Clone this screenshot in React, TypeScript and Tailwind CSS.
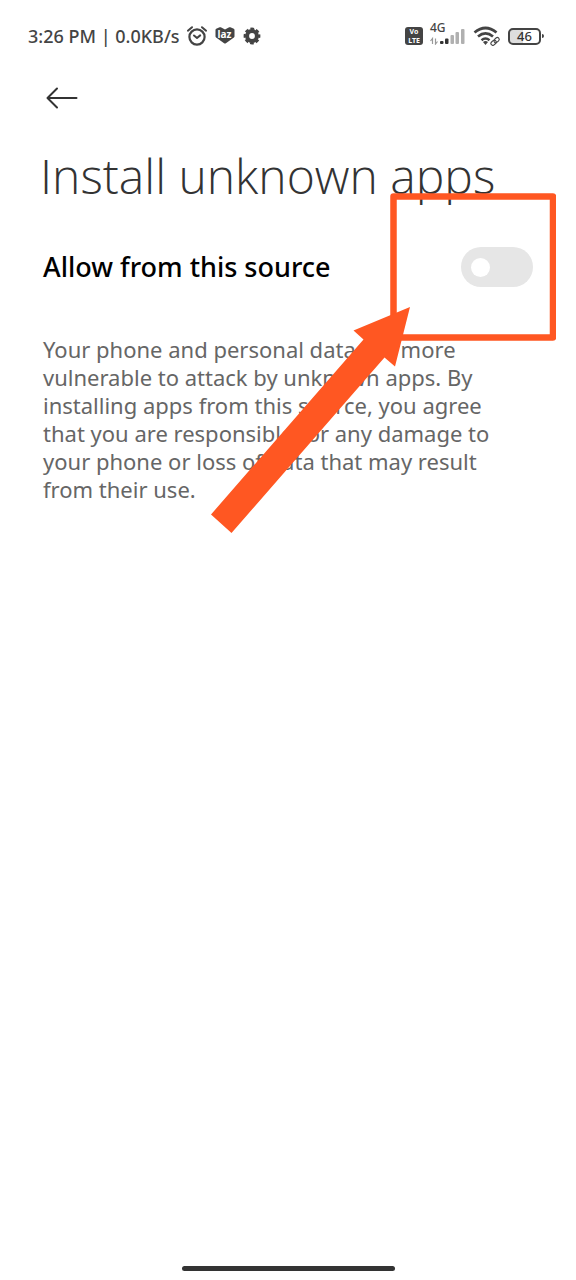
import { useState } from "react";

function AlarmIcon() {
  return (
    <svg className="h-5 w-5" viewBox="0 0 20 20" fill="none" stroke="#444" strokeLinecap="round" strokeLinejoin="round" aria-hidden="true">
      <circle cx="10" cy="11" r="7.6" strokeWidth="2.2" />
      <path d="M7 9.500 10 12l3.200-2.600" strokeWidth="2" />
      <path d="M.9 4.700 5 1.200M19.100 4.700 15 1.200" strokeWidth="2" />
    </svg>
  );
}

function ShopBadge() {
  return (
    <span className="relative flex h-[18px] w-5 items-center justify-center">
      <svg className="absolute inset-0 h-[18px] w-5" viewBox="0 0 20 18" aria-hidden="true">
        <path d="M.5 3Q.5 2.200 1.200 1.800L4.600 .3Q5.200 0 5.800 .3L10 2.600 14.200 .3Q14.800 0 15.400 .3L18.800 1.800Q19.500 2.200 19.500 3V9.200Q19.500 10 18.900 10.500L10.900 16.200Q10 16.800 9.100 16.200L1.100 10.500Q.5 10 .5 9.200Z" fill="#444" />
      </svg>
      <span className="relative pb-1 text-[10px] leading-[10px] font-bold text-white">laz</span>
    </span>
  );
}

function GearIcon() {
  return (
    <svg className="h-[18px] w-[18px]" viewBox="0 0 18 18" aria-hidden="true">
      <circle cx="9" cy="9" r="4.900" fill="none" stroke="#444" strokeWidth="4" />
      <circle cx="9" cy="9" r="7.100" fill="none" stroke="#444" strokeWidth="2.600" strokeDasharray="3.600 1.976" strokeDashoffset="1.800" />
    </svg>
  );
}

function SignalIcon() {
  return (
    <svg className="h-[18px] w-9" viewBox="0 0 36 18" aria-hidden="true">
      <g fill="none" stroke="#999" strokeWidth="1.200">
        <path d="M2.500 17v-5.500L.5 14M5.500 11.500V17l2-2.500" />
      </g>
      <rect x="10" y="14" width="3.500" height="3" rx="1" fill="#333" />
      <rect x="15" y="11.500" width="3.500" height="5.500" rx="1" fill="#333" />
      <rect x="20.500" y="8" width="3.500" height="9" rx="1" fill="#b0b0b0" />
      <rect x="25.500" y="5" width="3.500" height="12" rx="1" fill="#b0b0b0" />
      <rect x="31" y="2" width="3.500" height="15" rx="1" fill="#b0b0b0" />
    </svg>
  );
}

function WifiIcon() {
  return (
    <svg className="h-5 w-7" viewBox="0 0 28 20" fill="none" stroke="#444" aria-hidden="true">
      <path d="M1.500 6.500Q12.500-2.500 23.500 6.500" strokeWidth="2.800" />
      <path d="M5 10.500Q12.500 4.300 20 10.500" strokeWidth="2.700" />
      <path d="M8.500 14.200Q12.500 10.800 16.500 14.200" strokeWidth="2.600" />
      <path d="m10 16 2.500 2.900 2.500-2.900Q12.500 14.200 10 16Z" fill="#444" stroke="none" />
      <g transform="rotate(-42 22 15.500)" strokeWidth="1.100">
        <rect x="17.200" y="13.600" width="5.800" height="3.800" rx="1.900" />
        <rect x="21.200" y="13.600" width="5.800" height="3.800" rx="1.900" />
      </g>
    </svg>
  );
}

function Battery() {
  return (
    <span className="flex items-center gap-px">
      <span className="flex h-[17px] w-[33px] items-center justify-center rounded-[5px] border-2 border-[#444] bg-linear-to-r from-[#dedede] from-46% to-white to-46% text-[13px] leading-3 font-medium text-[#333]">
        46
      </span>
      <span className="h-1 w-[2px] rounded-r-sm bg-[#444]" />
    </span>
  );
}

function StatusBar() {
  return (
    <header className="flex h-12 items-center justify-between pt-6 pr-8 pl-7 text-[#444]">
      <div className="flex items-center">
        <span className="pr-[7px] text-[18px] leading-6 font-medium whitespace-nowrap">3:26 PM | 0.0KB/s</span>
        <span className="flex items-center gap-2">
          <AlarmIcon />
          <ShopBadge />
          <GearIcon />
        </span>
      </div>
      <div className="flex items-center gap-[7px]">
        <span className="flex h-[18px] w-[18px] flex-col items-center rounded-[3px] bg-[#444] text-[7px] leading-[9px] font-bold text-white">
          <span>Vo</span>
          <span>LTE</span>
        </span>
        <span className="relative flex">
          <span className="absolute -top-[5px] left-0 text-[12px] leading-3 font-medium">4G</span>
          <SignalIcon />
        </span>
        <WifiIcon />
        <Battery />
      </div>
    </header>
  );
}

function Callout() {
  return (
    <svg className="pointer-events-none absolute top-[190px] right-5 h-[346px] w-[346px]" viewBox="210 190 346 346" aria-hidden="true">
      <rect x="393.500" y="196.500" width="159.500" height="141" fill="none" stroke="#ff5722" strokeWidth="6.500" strokeLinejoin="round" />
      <path d="M410 307 353.500 330.500 363.500 339.500 211 514.500 231.500 533 384.500 357.500 395 366.500Z" fill="#ff5722" />
    </svg>
  );
}

export default function App() {
  const [allowed, setAllowed] = useState(false);
  return (
    <div className="relative flex min-h-screen flex-col bg-white font-['Noto_Sans','Open_Sans',sans-serif]">
      <StatusBar />
      <main className="flex-1">
        <div className="pt-[34px] pl-[46px]">
          <button type="button" aria-label="Back" className="block">
            <svg className="h-8 w-8" viewBox="0 0 32 32" fill="none" stroke="#333" strokeWidth="2" strokeLinecap="round" strokeLinejoin="round" aria-hidden="true">
              <path d="M30.500 16H2M11 6.500 1.500 16 11 25.500" />
            </svg>
          </button>
        </div>
        <h1 className="pt-8 pl-10 font-['Open_Sans',sans-serif] text-[48px] leading-[60px] font-light whitespace-nowrap text-[#333]">
          Install unknown apps
        </h1>
        <div className="flex items-center justify-between pt-[41px] pr-[43px] pl-[43px]">
          <label htmlFor="allow-source" className="text-[27px] leading-10 font-medium text-black">
            Allow from this source
          </label>
          <input
            id="allow-source"
            type="checkbox"
            role="switch"
            checked={allowed}
            onChange={(e) => setAllowed(e.target.checked)}
            className="flex h-10 w-[72px] shrink-0 cursor-pointer appearance-none items-center rounded-full bg-[#e6e6e6] px-[10px] before:h-[19px] before:w-[19px] before:rounded-full before:bg-white checked:justify-end checked:bg-blue-500"
          />
        </div>
        <p className="pt-12 pr-20 pl-[43px] text-[22px] leading-7 text-[#666]">
          Your phone and personal data are more vulnerable to attack by unknown apps. By installing apps from this source, you agree that you are responsible for any damage to your phone or loss of data that may result from their use.
        </p>
      </main>
      <footer className="flex justify-center pb-[9px]">
        <div className="h-[5px] w-[213px] rounded-full bg-[#333]" />
      </footer>
      <Callout />
    </div>
  );
}
